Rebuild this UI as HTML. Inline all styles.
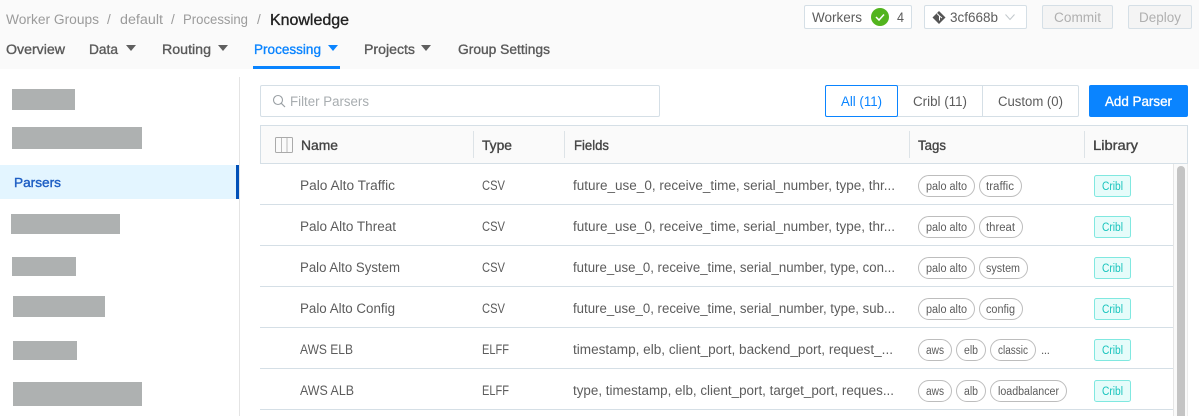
<!DOCTYPE html>
<html lang="en">
<head>
<meta charset="utf-8">
<title>Knowledge - Parsers</title>
<style>
html,body{margin:0;padding:0;background:#fff;width:1199px;height:416px;overflow:hidden}
svg{display:block}
text{font-family:"Liberation Sans",sans-serif;font-size:13.5px;fill:#5c5c5c}
.cr{fill:#9b9b9b}
.nav{font-size:13.5px;fill:#5a5a5a;stroke:#5a5a5a;stroke-width:.35px}
.th{font-size:13.5px;fill:#444;stroke:#444;stroke-width:.35px}
.tag{font-size:11.5px;fill:#5c5c5c}
.lib{font-size:11.5px;fill:#19c4bd}
.pill{fill:#fff;stroke:#bdbdbd;stroke-width:1}
.badge{fill:#e6fcfa;stroke:#80e8e0;stroke-width:1}
.ln{fill:#d5dfe6}
.blk{fill:#aeb1b1}
</style>
</head>
<body>
<svg width="1199" height="416" viewBox="0 0 1199 416" xmlns="http://www.w3.org/2000/svg">
<rect width="1199" height="416" fill="#fff"/>
<rect width="1199" height="69" fill="#fafafa"/>

<!-- breadcrumb -->
<text class="cr" x="6" y="24" textLength="93" lengthAdjust="spacingAndGlyphs">Worker Groups</text>
<text class="cr" x="107" y="24">/</text>
<text class="cr" x="120" y="24" textLength="43" lengthAdjust="spacingAndGlyphs">default</text>
<text class="cr" x="171" y="24">/</text>
<text class="cr" x="183" y="24" textLength="65" lengthAdjust="spacingAndGlyphs">Processing</text>
<text class="cr" x="257" y="24">/</text>
<text x="270" y="25" textLength="79" lengthAdjust="spacingAndGlyphs" style="font-size:16px;fill:#222;stroke:#222;stroke-width:.35px">Knowledge</text>

<!-- nav -->
<text class="nav" x="6" y="54" textLength="59" lengthAdjust="spacingAndGlyphs">Overview</text>
<text class="nav" x="89" y="54" textLength="29" lengthAdjust="spacingAndGlyphs">Data</text>
<path d="M126 45h10l-5 6z" fill="#5f5f5f"/>
<text class="nav" x="162" y="54" textLength="49" lengthAdjust="spacingAndGlyphs">Routing</text>
<path d="M218 45h10l-5 6z" fill="#5f5f5f"/>
<text class="nav" x="254" y="54" textLength="67" lengthAdjust="spacingAndGlyphs" style="fill:#0a84ff;stroke:#0a84ff">Processing</text>
<path d="M328 45h10l-5 6z" fill="#0a84ff"/>
<rect x="253" y="66" width="87" height="3" fill="#0a84ff"/>
<text class="nav" x="364" y="54" textLength="51" lengthAdjust="spacingAndGlyphs">Projects</text>
<path d="M421 45h10l-5 6z" fill="#5f5f5f"/>
<text class="nav" x="458" y="54" textLength="92" lengthAdjust="spacingAndGlyphs">Group Settings</text>

<!-- top right -->
<rect x="804.5" y="5.5" width="107" height="23" rx="1.5" fill="#fff" stroke="#d5dfe6"/>
<text x="812" y="22" textLength="50" lengthAdjust="spacingAndGlyphs">Workers</text>
<circle cx="880" cy="17" r="9" fill="#52b41e"/>
<path d="M876 17l3 3 5-5.5" fill="none" stroke="#fff" stroke-width="1.5"/>
<text x="897" y="22" textLength="7" lengthAdjust="spacingAndGlyphs">4</text>

<rect x="924.5" y="5.5" width="102" height="23" rx="1.5" fill="#fff" stroke="#d5dfe6"/>
<path d="M939 11l6.500 6.500-6.500 6.500-6.500-6.500z" fill="#555"/>
<path d="M937 13.500l2.500 2.500M939.500 16v4.500M939.500 16l2.500 2" stroke="#fff" stroke-width="1" fill="none"/>
<text x="950" y="22" textLength="48" lengthAdjust="spacingAndGlyphs">3cf668b</text>
<path d="M1005.500 14.500l4.500 5 4.500-5" fill="none" stroke="#c2c8cc" stroke-width="1"/>

<rect x="1042.500" y="5.500" width="70" height="23" rx="1.500" fill="#f4f4f4" stroke="#d5dfe6"/>
<text x="1054" y="22" textLength="47" lengthAdjust="spacingAndGlyphs" style="fill:#b0b0b0">Commit</text>
<rect x="1128.500" y="5.500" width="63" height="23" rx="1.500" fill="#f4f4f4" stroke="#d5dfe6"/>
<text x="1139" y="22" textLength="42" lengthAdjust="spacingAndGlyphs" style="fill:#b0b0b0">Deploy</text>

<!-- sidebar -->
<rect x="239" y="77" width="1" height="339" fill="#e4e4e4"/>
<rect class="blk" x="12" y="89" width="63" height="21"/>
<rect class="blk" x="12" y="127" width="130" height="22"/>
<rect x="0" y="165" width="236" height="34" fill="#e3f5ff"/>
<rect x="236" y="165" width="3" height="34" fill="#0050b8"/>
<text x="14" y="187" textLength="47" lengthAdjust="spacingAndGlyphs" style="font-size:13px;fill:#1f5fc4;stroke:#1f5fc4;stroke-width:.4px">Parsers</text>
<rect class="blk" x="11" y="214" width="109" height="20"/>
<rect class="blk" x="12" y="257" width="64" height="19"/>
<rect class="blk" x="13" y="296" width="92" height="21"/>
<rect class="blk" x="13" y="341" width="64" height="19"/>
<rect class="blk" x="13" y="382" width="129" height="24"/>

<!-- filter -->
<rect x="260.500" y="85.500" width="399" height="31" rx="1.500" fill="#fff" stroke="#d5dfe6"/>
<circle cx="278" cy="100" r="4.500" fill="none" stroke="#9aa0a4" stroke-width="1.100"/>
<path d="M281.300 103.300l3.700 3.700" stroke="#9aa0a4" stroke-width="1.200"/>
<text x="290" y="106" textLength="79" lengthAdjust="spacingAndGlyphs" style="fill:#a8adb0">Filter Parsers</text>

<!-- tabs -->
<rect x="825.500" y="85.500" width="253" height="31" rx="1.500" fill="#fff" stroke="#d5dfe6"/>
<rect x="982" y="86" width="1" height="30" fill="#d5dfe6"/>
<rect x="825.500" y="85.500" width="72" height="31" rx="1.500" fill="#fff" stroke="#0a84ff"/>
<text x="841" y="106" textLength="41" lengthAdjust="spacingAndGlyphs" style="fill:#0a84ff">All (11)</text>
<text x="913" y="106" textLength="54" lengthAdjust="spacingAndGlyphs">Cribl (11)</text>
<text x="998" y="106" textLength="65" lengthAdjust="spacingAndGlyphs">Custom (0)</text>
<rect x="1089" y="85" width="99" height="32" rx="2" fill="#0a84ff"/>
<text x="1105" y="106" textLength="67" lengthAdjust="spacingAndGlyphs" style="fill:#fff;stroke:#fff;stroke-width:.35px">Add Parser</text>

<!-- table header -->
<rect x="260.500" y="125.500" width="927" height="38" fill="#fafafa" stroke="#d5dfe6"/>
<rect x="275.500" y="137.500" width="17" height="15" rx="1" fill="none" stroke="#aaa"/>
<path d="M281.500 138v14M287 138v14" stroke="#bbb" stroke-width="1"/>
<text class="th" x="301" y="150" textLength="37" lengthAdjust="spacingAndGlyphs">Name</text>
<rect x="473" y="131" width="1" height="27" fill="#dde3e7"/>
<text class="th" x="482" y="150" textLength="30" lengthAdjust="spacingAndGlyphs">Type</text>
<rect x="564" y="131" width="1" height="27" fill="#dde3e7"/>
<text class="th" x="574" y="150" textLength="35" lengthAdjust="spacingAndGlyphs">Fields</text>
<rect x="909" y="131" width="1" height="27" fill="#dde3e7"/>
<text class="th" x="918" y="150" textLength="28" lengthAdjust="spacingAndGlyphs">Tags</text>
<rect x="1084" y="131" width="1" height="27" fill="#dde3e7"/>
<text class="th" x="1093" y="150" textLength="45" lengthAdjust="spacingAndGlyphs">Library</text>

<!-- scrollbar -->
<rect x="1173" y="164" width="15" height="252" fill="#fafafa"/>
<rect x="1173" y="164" width="1" height="252" fill="#e6e6e6"/>
<rect x="1187" y="164" width="1" height="252" fill="#ececec"/>
<path d="M1177 416v-246a4 4 0 0 1 8 0v246z" fill="#c4c4c4"/>

<!-- row lines -->
<rect class="ln" x="260" y="204" width="913" height="1"/>
<rect class="ln" x="260" y="245" width="913" height="1"/>
<rect class="ln" x="260" y="286" width="913" height="1"/>
<rect class="ln" x="260" y="327" width="913" height="1"/>
<rect class="ln" x="260" y="368" width="913" height="1"/>
<rect class="ln" x="260" y="409" width="913" height="1"/>

<!-- row 1 -->
<text x="300" y="190" textLength="95" lengthAdjust="spacingAndGlyphs">Palo Alto Traffic</text>
<text x="482" y="190" textLength="23" lengthAdjust="spacingAndGlyphs">CSV</text>
<text x="573" y="190" textLength="322" lengthAdjust="spacingAndGlyphs">future_use_0, receive_time, serial_number, type, thr...</text>
<rect class="pill" x="918.500" y="175.500" width="56" height="21" rx="10.500"/>
<text class="tag" x="926" y="190" textLength="41" lengthAdjust="spacingAndGlyphs">palo alto</text>
<rect class="pill" x="979.500" y="175.500" width="42" height="21" rx="10.500"/>
<text class="tag" x="986" y="190" textLength="28" lengthAdjust="spacingAndGlyphs">traffic</text>
<rect class="badge" x="1094.500" y="175.500" width="36" height="21" rx="2"/>
<text class="lib" x="1102" y="190" textLength="21" lengthAdjust="spacingAndGlyphs">Cribl</text>

<!-- row 2 -->
<text x="300" y="231" textLength="96" lengthAdjust="spacingAndGlyphs">Palo Alto Threat</text>
<text x="482" y="231" textLength="23" lengthAdjust="spacingAndGlyphs">CSV</text>
<text x="573" y="231" textLength="322" lengthAdjust="spacingAndGlyphs">future_use_0, receive_time, serial_number, type, thr...</text>
<rect class="pill" x="918.500" y="216.500" width="56" height="21" rx="10.500"/>
<text class="tag" x="926" y="231" textLength="41" lengthAdjust="spacingAndGlyphs">palo alto</text>
<rect class="pill" x="979.500" y="216.500" width="43" height="21" rx="10.500"/>
<text class="tag" x="986" y="231" textLength="29" lengthAdjust="spacingAndGlyphs">threat</text>
<rect class="badge" x="1094.500" y="216.500" width="36" height="21" rx="2"/>
<text class="lib" x="1102" y="231" textLength="21" lengthAdjust="spacingAndGlyphs">Cribl</text>

<!-- row 3 -->
<text x="300" y="272" textLength="100" lengthAdjust="spacingAndGlyphs">Palo Alto System</text>
<text x="482" y="272" textLength="23" lengthAdjust="spacingAndGlyphs">CSV</text>
<text x="573" y="272" textLength="322" lengthAdjust="spacingAndGlyphs">future_use_0, receive_time, serial_number, type, con...</text>
<rect class="pill" x="918.500" y="257.500" width="56" height="21" rx="10.500"/>
<text class="tag" x="926" y="272" textLength="41" lengthAdjust="spacingAndGlyphs">palo alto</text>
<rect class="pill" x="979.500" y="257.500" width="48" height="21" rx="10.500"/>
<text class="tag" x="986" y="272" textLength="34" lengthAdjust="spacingAndGlyphs">system</text>
<rect class="badge" x="1094.500" y="257.500" width="36" height="21" rx="2"/>
<text class="lib" x="1102" y="272" textLength="21" lengthAdjust="spacingAndGlyphs">Cribl</text>

<!-- row 4 -->
<text x="300" y="313" textLength="95" lengthAdjust="spacingAndGlyphs">Palo Alto Config</text>
<text x="482" y="313" textLength="23" lengthAdjust="spacingAndGlyphs">CSV</text>
<text x="573" y="313" textLength="322" lengthAdjust="spacingAndGlyphs">future_use_0, receive_time, serial_number, type, sub...</text>
<rect class="pill" x="918.500" y="298.500" width="56" height="21" rx="10.500"/>
<text class="tag" x="926" y="313" textLength="41" lengthAdjust="spacingAndGlyphs">palo alto</text>
<rect class="pill" x="979.500" y="298.500" width="43" height="21" rx="10.500"/>
<text class="tag" x="986" y="313" textLength="29" lengthAdjust="spacingAndGlyphs">config</text>
<rect class="badge" x="1094.500" y="298.500" width="36" height="21" rx="2"/>
<text class="lib" x="1102" y="313" textLength="21" lengthAdjust="spacingAndGlyphs">Cribl</text>

<!-- row 5 -->
<text x="300" y="354" textLength="53" lengthAdjust="spacingAndGlyphs">AWS ELB</text>
<text x="482" y="354" textLength="27" lengthAdjust="spacingAndGlyphs">ELFF</text>
<text x="573" y="354" textLength="320" lengthAdjust="spacingAndGlyphs">timestamp, elb, client_port, backend_port, request_...</text>
<rect class="pill" x="918.500" y="339.500" width="33" height="21" rx="10.500"/>
<text class="tag" x="926" y="354" textLength="18" lengthAdjust="spacingAndGlyphs">aws</text>
<rect class="pill" x="956.500" y="339.500" width="29" height="21" rx="10.500"/>
<text class="tag" x="964" y="354" textLength="14" lengthAdjust="spacingAndGlyphs">elb</text>
<rect class="pill" x="990.500" y="339.500" width="45" height="21" rx="10.500"/>
<text class="tag" x="998" y="354" textLength="30" lengthAdjust="spacingAndGlyphs">classic</text>
<text class="tag" x="1041" y="354" textLength="9">...</text>
<rect class="badge" x="1094.500" y="339.500" width="36" height="21" rx="2"/>
<text class="lib" x="1102" y="354" textLength="21" lengthAdjust="spacingAndGlyphs">Cribl</text>

<!-- row 6 -->
<text x="300" y="395" textLength="54" lengthAdjust="spacingAndGlyphs">AWS ALB</text>
<text x="482" y="395" textLength="27" lengthAdjust="spacingAndGlyphs">ELFF</text>
<text x="573" y="395" textLength="321" lengthAdjust="spacingAndGlyphs">type, timestamp, elb, client_port, target_port, reques...</text>
<rect class="pill" x="918.500" y="380.500" width="33" height="21" rx="10.500"/>
<text class="tag" x="926" y="395" textLength="18" lengthAdjust="spacingAndGlyphs">aws</text>
<rect class="pill" x="956.500" y="380.500" width="29" height="21" rx="10.500"/>
<text class="tag" x="964" y="395" textLength="14" lengthAdjust="spacingAndGlyphs">alb</text>
<rect class="pill" x="990.500" y="380.500" width="76" height="21" rx="10.500"/>
<text class="tag" x="998" y="395" textLength="61" lengthAdjust="spacingAndGlyphs">loadbalancer</text>
<rect class="badge" x="1094.500" y="380.500" width="36" height="21" rx="2"/>
<text class="lib" x="1102" y="395" textLength="21" lengthAdjust="spacingAndGlyphs">Cribl</text>
</svg>
</body>
</html>
